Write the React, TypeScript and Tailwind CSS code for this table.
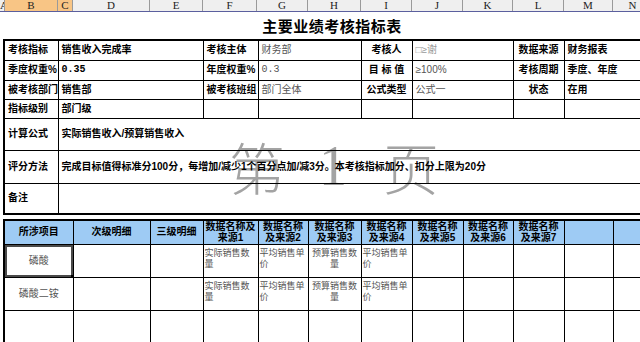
import React from "react";

const base = "border border-black align-middle overflow-hidden";
const cell = base + " px-[3px] text-[10px] leading-[12px] whitespace-nowrap";
const lbl = cell + " font-bold text-black";
const val = cell + " text-[#555]";
const bval = cell + " font-bold text-black";
const hdr = base + " font-bold text-black text-center whitespace-normal px-0 text-[10px] leading-[11px]";
const dat = base + " text-[#555] whitespace-normal px-[1px] align-top pt-[3px] text-[9px] leading-[11px]";

function Cols() {
  return (
    <colgroup>
      <col className="w-[54px]" />
      <col className="w-[15px]" />
      <col className="w-[77px]" />
      <col className="w-[53px]" />
      <col className="w-[55px]" />
      <col className="w-[50px]" />
      <col className="w-[53px]" />
      <col className="w-[51px]" />
      <col className="w-[51px]" />
      <col className="w-[50px]" />
      <col className="w-[51px]" />
      <col className="w-[49px]" />
      <col className="w-[60px]" />
    </colgroup>
  );
}

function ColHeader() {
  const items: [string, string, boolean][] = [
    ["A", "w-[5px]", false],
    ["B", "w-[53px]", true],
    ["C", "w-[15px]", true],
    ["D", "w-[77px]", false],
    ["E", "w-[53px]", false],
    ["F", "w-[54px]", false],
    ["G", "w-[51px]", false],
    ["H", "w-[53px]", false],
    ["I", "w-[51px]", false],
    ["J", "w-[51px]", false],
    ["K", "w-[50px]", false],
    ["L", "w-[51px]", false],
    ["M", "w-[49px]", false],
    ["N", "w-[40px]", false],
  ];
  return (
    <div className="flex h-[12px] border-b border-[#5b5f9e] bg-[#efefef] font-['Liberation_Serif',serif] text-[11px] leading-[11px] text-[#222]">
      {items.map(([l, w, sel]) => (
        <div
          key={l}
          className={`${w} shrink-0 overflow-hidden border-r border-[#9a9a9a] text-center ${sel ? "bg-[#f8c585]" : ""}`}
        >
          {l}
        </div>
      ))}
    </div>
  );
}

export default function App() {
  return (
    <div className="relative w-[640px] h-[342px] overflow-hidden bg-white font-['Liberation_Sans','Noto_Sans_CJK_SC',sans-serif]">
      <ColHeader />
      <div className="flex h-[27px] items-center justify-center pl-[24px] font-['Noto_Sans_CJK_SC',sans-serif] text-[15px] font-bold leading-none tracking-[0.5px] text-black">
        主要业绩考核指标表
      </div>

      {/* watermark */}
      <div className="pointer-events-none absolute left-[229px] top-[134px] flex items-end text-[#a3a3a3] font-['Noto_Sans_CJK_SC',serif] font-light text-[56px] leading-[64px]">
        <span>第</span>
        <span className="ml-[34px] font-['Liberation_Serif',serif] font-normal text-[56px]">1</span>
        <span className="ml-[36px]">页</span>
      </div>

      <div className="relative ml-[3px]">
        <table className="w-[669px] table-fixed border-collapse border-2 border-black">
          <Cols />
          <tbody>
            <tr className="h-[20px]">
              <td className={lbl}>考核指标</td>
              <td className={bval} colSpan={3}>销售收入完成率</td>
              <td className={lbl}>考核主体</td>
              <td className={val} colSpan={2}>财务部</td>
              <td className={lbl + " text-center"}>考核人</td>
              <td className={base + " px-[3px] text-[10px] leading-[12px] whitespace-nowrap text-[#999]"} colSpan={2}>□≥谢</td>
              <td className={lbl + " text-center"}>数据来源</td>
              <td className={bval} colSpan={2}>财务报表</td>
            </tr>
            <tr className="h-[20px]">
              <td className={lbl}>季度权重%</td>
              <td className={bval + " font-['Liberation_Mono',monospace]"} colSpan={3}>0.35</td>
              <td className={lbl}>年度权重%</td>
              <td className={val + " font-['Liberation_Mono',monospace]"} colSpan={2}>0.3</td>
              <td className={lbl + " text-center"}>目 标 值</td>
              <td className={val} colSpan={2}>≥100%</td>
              <td className={lbl + " text-center"}>考核周期</td>
              <td className={bval} colSpan={2}>季度、年度</td>
            </tr>
            <tr className="h-[19px]">
              <td className={lbl}>被考核部门</td>
              <td className={bval} colSpan={3}>销售部</td>
              <td className={lbl}>被考核班组</td>
              <td className={val} colSpan={2}>部门全体</td>
              <td className={lbl + " text-center"}>公式类型</td>
              <td className={val} colSpan={2}>公式一</td>
              <td className={lbl + " text-center"}>状态</td>
              <td className={bval} colSpan={2}>在用</td>
            </tr>
            <tr className="h-[19px]">
              <td className={lbl}>指标级别</td>
              <td className={bval} colSpan={3}>部门级</td>
              <td className={cell}></td>
              <td className={cell} colSpan={2}></td>
              <td className={cell}></td>
              <td className={cell} colSpan={2}></td>
              <td className={cell}></td>
              <td className={cell} colSpan={2}></td>
            </tr>
            <tr className="h-[32px]">
              <td className={lbl}>计算公式</td>
              <td className={bval} colSpan={12}>实际销售收入/预算销售收入</td>
            </tr>
            <tr className="h-[33px]">
              <td className={lbl}>评分方法</td>
              <td className={bval} colSpan={12}>
                完成目标值得标准分100分，每增加/减少1个百分点加/减3分。本考核指标加分、扣分上限为20分
              </td>
            </tr>
            <tr className="h-[31px]">
              <td className={lbl}>备注</td>
              <td className={bval} colSpan={12}></td>
            </tr>
          </tbody>
        </table>

        <table className="mt-[4px] w-[669px] table-fixed border-collapse border-2 border-black">
          <Cols />
          <tbody>
            <tr className="h-[24px] bg-[#9ecbf4]">
              <td className={lbl + " text-center"} colSpan={2}>所涉项目</td>
              <td className={lbl + " text-center"}>次级明细</td>
              <td className={lbl + " text-center"}>三级明细</td>
              <td className={hdr}>数据名称及<br />来源1</td>
              <td className={hdr}>数据名称<br />及来源2</td>
              <td className={hdr}>数据名称<br />及来源3</td>
              <td className={hdr}>数据名称<br />及来源4</td>
              <td className={hdr}>数据名称<br />及来源5</td>
              <td className={hdr}>数据名称<br />及来源6</td>
              <td className={hdr}>数据名称<br />及来源7</td>
              <td className={cell}></td>
              <td className={cell}></td>
            </tr>
            {["磷酸", "磷酸二铵"].map((name, i) => (
              <tr key={name} className="h-[33px]">
                <td
                  className={val + " text-center" + (i === 0 ? " shadow-[inset_0_0_0_2px_#4a4a4a] relative" : "")}
                  colSpan={2}
                >
                  {name}
                  {i === 0 && (
                    <span className="absolute -bottom-[3px] -right-[3px] h-[5px] w-[5px] bg-black" />
                  )}
                </td>
                <td className={cell}></td>
                <td className={cell}></td>
                <td className={dat}>实际销售数<br />量</td>
                <td className={dat}>平均销售单<br />价</td>
                <td className={dat + " text-center"}>预算销售数<br />量</td>
                <td className={dat}>平均销售单<br />价</td>
                <td className={cell}></td>
                <td className={cell}></td>
                <td className={cell}></td>
                <td className={cell}></td>
                <td className={cell}></td>
              </tr>
            ))}
            <tr className="h-[40px]">
              <td className={cell} colSpan={2}></td>
              <td className={cell}></td>
              <td className={cell}></td>
              <td className={cell}></td>
              <td className={cell}></td>
              <td className={cell}></td>
              <td className={cell}></td>
              <td className={cell}></td>
              <td className={cell}></td>
              <td className={cell}></td>
              <td className={cell}></td>
              <td className={cell}></td>
            </tr>
          </tbody>
        </table>
      </div>
    </div>
  );
}
